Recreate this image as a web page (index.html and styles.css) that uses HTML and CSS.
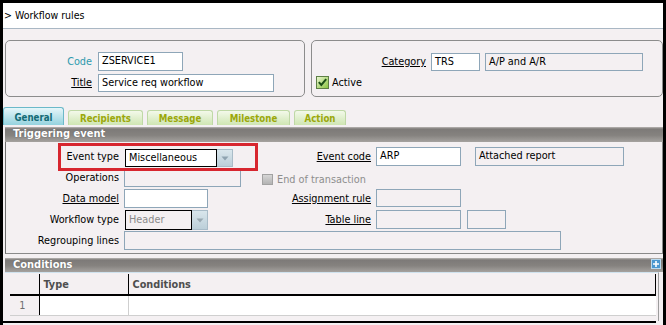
FILE: index.html
```html
<!DOCTYPE html>
<html lang="en">
<head>
    <meta charset="UTF-8">
    <title>Workflow rules</title>
    <link rel="stylesheet" href="styles.css">
</head>
<body>

<div class="screen">
    <div class="titlebar">&gt; Workflow rules</div>

    <div class="header">
        <div class="box box-main">
            <div class="field">
                <span class="lbl lbl-code">Code</span>
                <span class="inp w85 h19">ZSERVICE1</span>
            </div>
            <div class="field">
                <span class="lbl u">Title</span>
                <span class="inp w176 h18">Service req workflow</span>
            </div>
        </div>
        <div class="box box-cat">
            <div class="field">
                <span class="lbl lbl-cat u">Category</span>
                <span class="inp w49 h18">TRS</span>
                <span class="inp off w158 h18">A/P and A/R</span>
            </div>
            <div class="check-row">
                <svg width="13" height="13" viewBox="0 0 13 13">
                    <defs>
                        <linearGradient id="chk" x1="0" y1="0" x2="1" y2="1">
                            <stop offset="0" stop-color="#eef8d6"/>
                            <stop offset="1" stop-color="#86c23c"/>
                        </linearGradient>
                    </defs>
                    <rect x="0.5" y="0.5" width="12" height="12" fill="url(#chk)" stroke="#5e7f46"/>
                    <path d="M2.8 6.2 L5.3 9 L10.2 3.2" fill="none" stroke="#1d4f17" stroke-width="2"/>
                </svg>
                <span>Active</span>
            </div>
        </div>
    </div>

    <div class="tabs">
        <div class="tab active w61">General</div>
        <div class="tab w75">Recipients</div>
        <div class="tab w66">Message</div>
        <div class="tab w73">Milestone</div>
        <div class="tab w52">Action</div>
    </div>

    <div class="section">
        <div class="bar">Triggering event</div>
        <div class="panel grid">
            <span class="lbl">Event type</span>
            <span class="combo w108">
                <span class="combo-text">Miscellaneous</span>
                <span class="combo-btn"><svg width="8" height="5" viewBox="0 0 8 5"><path d="M0.5 0.5 L7.5 0.5 L4 4.5 Z" fill="#8ea3b0"/></svg></span>
            </span>
            <span class="lbl u">Event code</span>
            <span class="cell">
                <span class="inp w85 h19">ARP</span>
                <span class="inp off w149 h19 ml15">Attached report</span>
            </span>

            <span class="lbl">Operations</span>
            <span class="cell"><span class="inp off w117 h19">&nbsp;</span></span>
            <span class="check-off">
                <span class="box-off"></span>
                <span>End of transaction</span>
            </span>
            <span></span>

            <span class="lbl u">Data model</span>
            <span class="cell"><span class="inp w84 h19">&nbsp;</span></span>
            <span class="lbl u">Assignment rule</span>
            <span class="cell"><span class="inp off w85 h18">&nbsp;</span></span>

            <span class="lbl">Workflow type</span>
            <span class="combo combo-off w83">
                <span class="combo-text">Header</span>
                <span class="combo-btn"><svg width="8" height="5" viewBox="0 0 8 5"><path d="M0.5 0.5 L7.5 0.5 L4 4.5 Z" fill="#9aa9b2"/></svg></span>
            </span>
            <span class="lbl u">Table line</span>
            <span class="cell">
                <span class="inp off w85 h19">&nbsp;</span>
                <span class="inp off w39 h19 ml6">&nbsp;</span>
            </span>

            <span class="lbl">Regrouping lines</span>
            <span class="cell span3"><span class="inp off w437 h19">&nbsp;</span></span>
        </div>
    </div>

    <div class="section section-cond">
        <div class="bar">
            Conditions
            <span class="plus">
                <svg width="10" height="10" viewBox="0 0 10 10">
                    <rect x="0.5" y="0.5" width="9" height="9" fill="#4b97cf" stroke="#b9daf0"/>
                    <path d="M5 2 V8 M2 5 H8" stroke="#fff" stroke-width="1.6"/>
                </svg>
            </span>
        </div>
        <div class="panel-cond">
            <table class="grid-table">
                <tr class="head">
                    <th class="num"></th>
                    <th class="type">Type</th>
                    <th class="cond">Conditions</th>
                </tr>
                <tr class="row">
                    <td class="num">1</td>
                    <td class="type"></td>
                    <td class="cond"></td>
                </tr>
            </table>
        </div>
    </div>

    <div class="bottom-line"></div>

    <div class="annot"></div>
</div>

</body>
</html>
```

FILE: styles.css
```css
* {
    margin: 0;
    padding: 0;
    box-sizing: border-box;
}

body {
    width: 666px;
    height: 325px;
    overflow: hidden;
    background: #f4f0f2;
    font-family: "DejaVu Sans Condensed", "Liberation Sans", sans-serif;
    font-size: 10.8px;
    color: #000;
}

.screen {
    position: relative;
    width: 666px;
    height: 325px;
    border: 3px solid #000;
    border-bottom: 0;
    background: #f4f0f2;
}

.titlebar {
    height: 26px;
    background: #fff;
    border-bottom: 1px solid #a9b7c4;
    padding-left: 1px;
    line-height: 24px;
    font-size: 10.5px;
}

/* header boxes */
.header {
    display: flex;
    gap: 6px;
    padding: 11px 0 0 2px;
}

.box {
    height: 57px;
    border: 1px solid #8c8c8c;
    border-radius: 5px;
    padding-top: 10px;
}

.box-main {
    width: 300px;
}

.box-cat {
    flex: 1;
}

.field {
    display: flex;
    align-items: center;
    height: 21px;
}

.box-main .lbl {
    width: 86px;
    margin-right: 6px;
}

.box-cat .lbl-cat {
    width: 114px;
    margin-right: 5px;
}

.box-cat .inp + .inp {
    margin-left: 5px;
}

.lbl {
    text-align: right;
    white-space: nowrap;
}

.lbl-code {
    color: #2e9aae;
}

.u {
    text-decoration: underline;
}

.check-row {
    display: flex;
    align-items: center;
    gap: 3px;
    height: 20px;
    padding-left: 4px;
}

/* inputs */
.inp {
    display: inline-block;
    background: #fff;
    border: 1px solid #8ea6b8;
    padding-left: 3px;
    line-height: 16px;
    white-space: nowrap;
    overflow: hidden;
}

.inp.off {
    background: #f4f0f2;
}

.h18 { height: 18px; }
.h19 { height: 19px; }
.w39 { width: 39px; }
.w49 { width: 49px; }
.w84 { width: 84px; }
.w85 { width: 85px; }
.w117 { width: 117px; }
.w149 { width: 149px; }
.w158 { width: 158px; }
.w176 { width: 176px; }
.w437 { width: 437px; }
.ml6 { margin-left: 6px; }
.ml15 { margin-left: 14px; }

/* tabs */
.tabs {
    display: flex;
    align-items: flex-end;
    gap: 4px;
    height: 19px;
    margin-top: 9px;
}

.tab {
    height: 15px;
    border: 1px solid #bfd8a6;
    border-bottom: 0;
    border-radius: 3px 3px 0 0;
    background: linear-gradient(#f3f9ea, #cfe6b3);
    color: #9ba80a;
    font-weight: bold;
    font-size: 9.6px;
    line-height: 15px;
    text-align: center;
}

.tab.active {
    height: 18px;
    border-color: #6bb9c9;
    background: linear-gradient(#e6f6f9, #95d3df);
    color: #136a75;
    line-height: 19px;
}

.w52 { width: 52px; }
.w61 { width: 61px; }
.w66 { width: 66px; }
.w73 { width: 73px; }
.w75 { width: 75px; }

/* sections */
.section {
    margin: 2px 0 0 2px;
}

.bar {
    position: relative;
    height: 15px;
    background: linear-gradient(#b9b6b4 0, #7d7a78 2px, #85827f 55%, #a5a29f 100%);
    color: #fff;
    font-weight: bold;
    font-size: 11px;
    line-height: 14px;
    padding-left: 8px;
    text-shadow: 0 0 1px #555;
}

.panel {
    border-left: 1px solid #6e6e6e;
    border-right: 1px solid #8a8a8a;
    border-bottom: 1px solid #8a8a8a;
    padding: 5px 0 1px 0;
}

.grid {
    display: grid;
    grid-template-columns: 113px 133px 109px 1fr;
    grid-auto-rows: 21px;
    column-gap: 5px;
    align-items: start;
}

.grid .lbl {
    line-height: 19px;
}

.cell {
    display: flex;
}

.span3 {
    grid-column: 2 / span 3;
}

.combo {
    display: flex;
    height: 18px;
    margin: 2px 0 0 1px;
}

.combo-text {
    flex: 1;
    background: #fff;
    border: 1px solid #000;
    padding-left: 3px;
    line-height: 16px;
}

.combo-btn {
    width: 16px;
    border: 1px solid #a9bcc8;
    border-left: 0;
    background: linear-gradient(#d9e6ec, #bccfd9);
    display: flex;
    align-items: center;
    justify-content: center;
}

.combo-off {
    height: 20px;
    margin-top: 0;
}

.combo-off .combo-text {
    background: #f4f0f2;
    color: #8a8a8a;
    line-height: 18px;
}

.w83 { width: 83px; }
.w108 { width: 108px; }

.check-off {
    display: flex;
    align-items: center;
    gap: 4px;
    height: 19px;
    padding-top: 3px;
    color: #8e8e8e;
    white-space: nowrap;
}

.box-off {
    flex-shrink: 0;
    width: 11px;
    height: 11px;
    border: 1px solid #a2a2a2;
    background: linear-gradient(#d6d6d6, #b3b3b3);
}

/* conditions */
.section-cond {
    margin-top: 4px;
}

.section-cond .bar {
    height: 14px;
    line-height: 13px;
}

.plus {
    position: absolute;
    right: 2px;
    top: 1px;
    line-height: 0;
}

.panel-cond {
    border-top: 1px solid #cfe2ee;
    border-right: 1px solid #9c9c9c;
    margin-right: 4px;
    padding: 1px 0 0 5px;
    height: 49px;
}

.grid-table {
    width: 646px;
    border-collapse: collapse;
    table-layout: fixed;
}

.grid-table th {
    height: 21px;
    text-align: left;
    font-weight: bold;
    color: #4e4e4e;
    padding-left: 4px;
    border-bottom: 2px solid #000;
    border-right: 1px solid #000;
    background: #f4f0f2;
}

.grid-table th.num {
    width: 29px;
    border-right: 1px solid #000;
}

.grid-table th.type {
    width: 89px;
}

.grid-table td {
    height: 20px;
    background: #fff;
    border-bottom: 1px solid #cfcfcf;
    border-right: 1px solid #cfcfcf;
}

.grid-table td.num {
    background: #f4f0f2;
    color: #6f6f6f;
    text-align: center;
    border-right: 1px solid #000;
    padding-right: 4px;
}

.grid-table td.cond {
    border-right: 0;
}

.bottom-line {
    height: 2px;
    margin-right: 7px;
    background: #000;
}

/* red annotation frame over the event type field */
.annot {
    position: absolute;
    left: 55px;
    top: 140px;
    width: 200px;
    height: 28px;
    border: 3px solid #d7262f;
}
```
